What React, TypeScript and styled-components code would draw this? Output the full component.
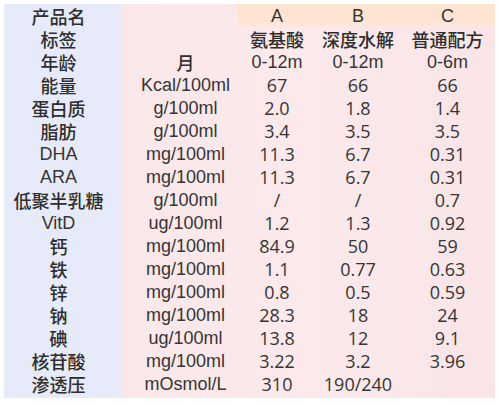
import { Fragment } from "react";
import { createGlobalStyle, styled } from "styled-components";

const GlobalStyle = createGlobalStyle`
  html, body {
    margin: 0;
    padding: 0;
    background: #ffffff;
  }
`;

const Page = styled.div`
  width: 499px;
  height: 405px;
  padding: 4px 4px 0 4px;
  box-sizing: border-box;
  background: #ffffff;
`;

const Table = styled.div`
  display: grid;
  grid-template-columns: 117px 117px 78px 84px 95px;
  grid-auto-rows: 23px;
  padding-bottom: 3px;
  background: linear-gradient(
    to right,
    #e7eaf8 0,
    #e7eaf8 116px,
    #fae7ea 118px,
    #fbe9ec 60%,
    #f9e5e8 100%
  );
`;

type Kind = "cjk" | "unit" | "num" | "latin";

const fontFor = (kind: Kind) => {
  switch (kind) {
    case "cjk":
      return `font-family: "Noto Sans CJK SC", "Noto Sans", sans-serif; font-weight: 500; font-size: 18px; color: #2e2e2e;`;
    case "unit":
    case "latin":
      return `font-family: "Liberation Sans", Arial, sans-serif; font-size: 18px;`;
    default:
      return `font-family: "Open Sans", "Liberation Sans", sans-serif; font-size: 18px;`;
  }
};

const Cell = styled.div<{ $kind: Kind; $shift?: number; $peach?: boolean }>`
  display: flex;
  align-items: center;
  justify-content: center;
  white-space: nowrap;
  color: #353535;
  line-height: 1;
  padding-left: ${(p) => (p.$shift && p.$shift > 0 ? p.$shift : 0)}px;
  padding-right: ${(p) => (p.$shift && p.$shift < 0 ? -p.$shift : 0)}px;
  ${(p) => fontFor(p.$kind)}
  ${(p) =>
    p.$peach &&
    `background: linear-gradient(to bottom, #fde3d0 0, #fde4d3 75%, #fbe7e4 100%);`}
`;

const isCjk = (s: string) => /[\u4e00-\u9fff]/.test(s);

type RowData = [string, string, string, string, string];

const rows: RowData[] = [
  ["产品名", "", "A", "B", "C"],
  ["标签", "", "氨基酸", "深度水解", "普通配方"],
  ["年龄", "月", "0-12m", "0-12m", "0-6m"],
  ["能量", "Kcal/100ml", "67", "66", "66"],
  ["蛋白质", "g/100ml", "2.0", "1.8", "1.4"],
  ["脂肪", "g/100ml", "3.4", "3.5", "3.5"],
  ["DHA", "mg/100ml", "11.3", "6.7", "0.31"],
  ["ARA", "mg/100ml", "11.3", "6.7", "0.31"],
  ["低聚半乳糖", "g/100ml", "/", "/", "0.7"],
  ["VitD", "ug/100ml", "1.2", "1.3", "0.92"],
  ["钙", "mg/100ml", "84.9", "50", "59"],
  ["铁", "mg/100ml", "1.1", "0.77", "0.63"],
  ["锌", "mg/100ml", "0.8", "0.5", "0.59"],
  ["钠", "mg/100ml", "28.3", "18", "24"],
  ["碘", "ug/100ml", "13.8", "12", "9.1"],
  ["核苷酸", "mg/100ml", "3.22", "3.2", "3.96"],
  ["渗透压", "mOsmol/L", "310", "190/240", ""],
];

function valueKind(s: string, rowIndex: number): Kind {
  if (isCjk(s)) return "cjk";
  if (rowIndex <= 2) return "latin";
  return "num";
}

export default function App() {
  return (
    <>
      <GlobalStyle />
      <Page>
        <Table>
          {rows.map((row, i) => (
            <Fragment key={i}>
              <Cell $kind={isCjk(row[0]) ? "cjk" : "latin"} $shift={-8}>
                {row[0]}
              </Cell>
              <Cell $kind={isCjk(row[1]) ? "cjk" : "unit"} $shift={12}>
                {row[1]}
              </Cell>
              {row.slice(2).map((v, j) => (
                <Cell key={j} $kind={valueKind(v, i)} $peach={i === 0}>
                  {v}
                </Cell>
              ))}
            </Fragment>
          ))}
        </Table>
      </Page>
    </>
  );
}
